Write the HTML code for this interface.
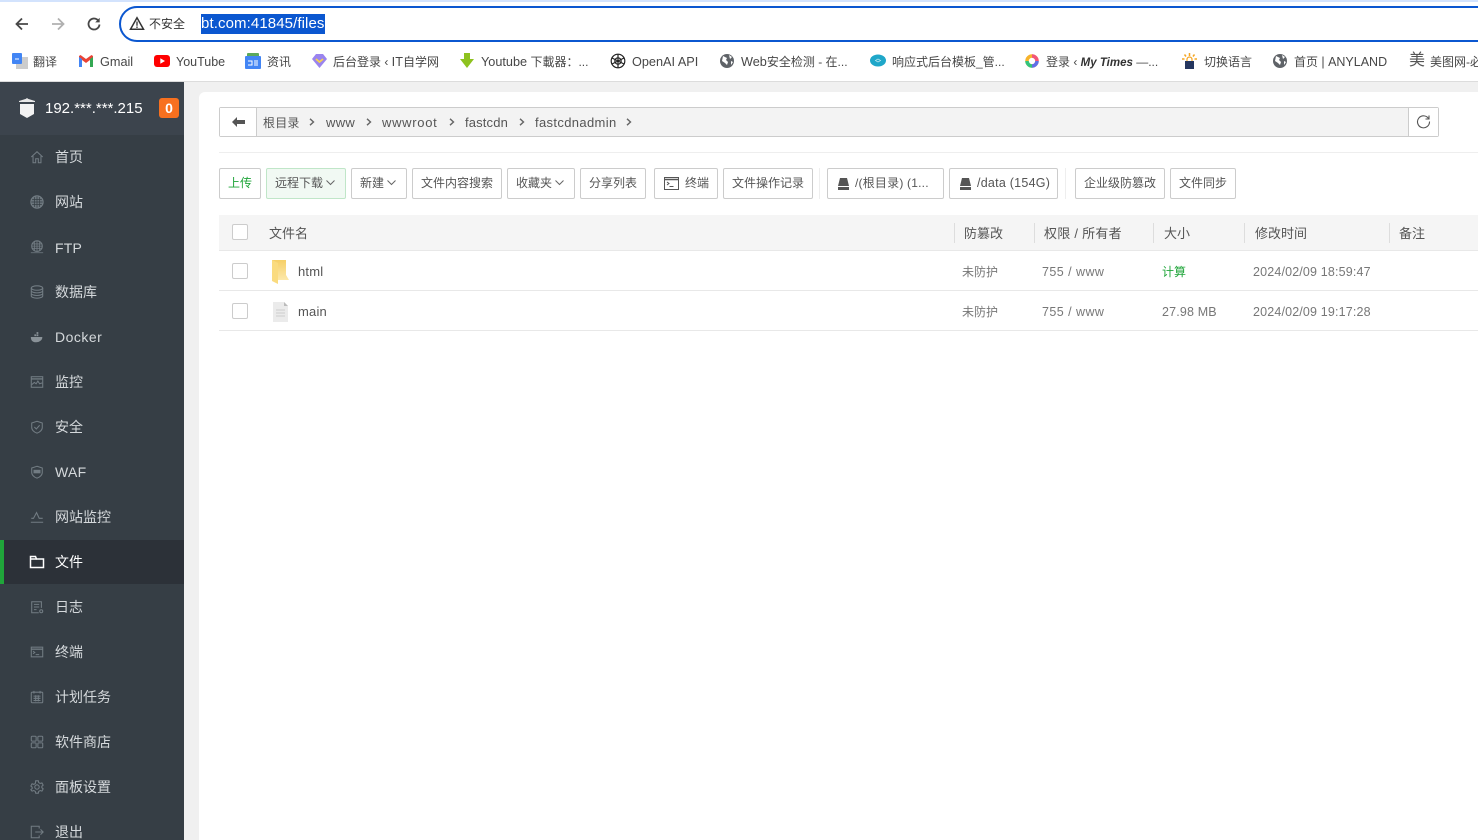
<!DOCTYPE html>
<html lang="zh-CN"><head><meta charset="utf-8"><title>文件管理</title>
<style>
*{box-sizing:border-box}
html,body{margin:0;padding:0;width:1478px;height:840px;overflow:hidden;background:#f0f0f0;font-family:"Liberation Sans","Noto Sans CJK SC",sans-serif}
body{position:relative}
.a,.t,.m,.b,.i{position:absolute}
.t,.m,.b{white-space:nowrap}
.t{line-height:20px}
.bm{font-size:12px;color:#474747;top:52px}
.l{font-size:12.7px}
.m{left:55px;font-size:14px;line-height:20px;color:#d5d9dc}
.i{left:29px;width:16px;height:16px;fill:none;stroke:#727c83;stroke-width:1.2;transform:scale(.88)}
.b{top:168px;height:31px;border:1px solid #ccc;border-radius:2px;background:#fff;font-size:12px;line-height:29px;color:#555;text-align:center}
.h{font-size:13px;color:#555;top:224px}
.c{font-size:12px;color:#777}
.n{font-size:12.5px;letter-spacing:.16px}
.s{position:absolute;width:1px;background:#ddd;top:223px;height:20px}
.cb{position:absolute;width:16px;height:16px;border:1px solid #ccc;border-radius:2px;background:#fff;left:232px}
.cr{position:absolute;top:118px;width:8px;height:8px;fill:none;stroke:#666;stroke-width:1.4}
.p{font-size:13px;color:#555;top:113px;letter-spacing:.3px}
</style></head><body>

<!-- browser chrome -->
<div class="a" style="left:0;top:0;width:1478px;height:82px;background:#fff;border-bottom:1px solid #dcdcdc"></div>
<div class="a" style="left:0;top:0;width:1478px;height:2px;background:#d3e3fd"></div>
<svg class="a" style="left:14px;top:16px" width="16" height="16" viewBox="0 0 16 16" fill="none" stroke="#474747" stroke-width="1.8"><path d="M14 8H3M8 2.500L2.500 8 8 13.500"/></svg>
<svg class="a" style="left:50px;top:16px" width="16" height="16" viewBox="0 0 16 16" fill="none" stroke="#b0b0b0" stroke-width="1.8"><path d="M2 8h11M8 2.500L13.500 8 8 13.500"/></svg>
<svg class="a" style="left:86px;top:16px" width="16" height="16" viewBox="0 0 16 16" fill="none" stroke="#474747" stroke-width="1.8"><path d="M13.500 8.500A5.500 5.500 0 1 1 11.800 4"/><path d="M13.700 1.800v4.600H9.200z" fill="#474747" stroke="none"/></svg>
<div class="a" style="left:119px;top:6px;width:1400px;height:36px;border:2px solid #0b57d0;border-radius:18px;background:#fff"></div>
<svg class="a" style="left:129px;top:16px" width="16" height="15" viewBox="0 0 16 15" fill="none" stroke="#333" stroke-width="1.5"><path d="M8 1.800L1.500 13.200h13z"/><path d="M8 5.500v4.200M8 10.500v1.500" stroke-width="1.3"/></svg>
<div class="t" style="left:149px;top:14px;font-size:12px;color:#333">不安全</div>
<div class="a" style="left:201px;top:14px;width:124px;height:20px;background:#0b57d0"></div>
<div class="t" style="left:201px;top:14px;font-size:15px;color:#fff;letter-spacing:.1px">bt.com:41845/files</div>

<!-- bookmarks -->
<svg class="a" style="left:12px;top:53px" width="16" height="16" viewBox="0 0 16 16"><rect x="4" y="4" width="12" height="12" fill="#ccc"/><rect width="10" height="11" rx="1" fill="#4285f4"/><path d="M3 6h4" stroke="#fff"/></svg>
<div class="t bm" style="left:33px">翻译</div>
<svg class="a" style="left:79px;top:55px" width="14" height="12" viewBox="0 0 14 12"><path d="M0 1v11h3V5l4 3 4-3v7h3V1L12.500 0 7 4 1.500 0z" fill="#ea4335"/><path d="M0 2v10h3V4z" fill="#4285f4"/><path d="M11 4v8h3V2z" fill="#34a853"/></svg>
<div class="t bm l" style="left:100px">Gmail</div>
<svg class="a" style="left:154px;top:55px" width="16" height="12" viewBox="0 0 16 12"><rect width="16" height="12" rx="3" fill="#f00"/><path d="M6.300 3.300v5.400L11 6z" fill="#fff"/></svg>
<div class="t bm l" style="left:176px;font-size:12.500px">YouTube</div>
<svg class="a" style="left:245px;top:53px" width="16" height="16" viewBox="0 0 16 16"><rect x="2" y="0" width="12" height="6" rx="1" fill="#5aa85c"/><rect x="0" y="3" width="16" height="13" rx="1" fill="#4285f4"/><path d="M3 8h4v4H3M9 8h4M9 10h4M9 12h4" stroke="#fff" fill="none"/></svg>
<div class="t bm" style="left:267px">资讯</div>
<svg class="a" style="left:312px;top:54px" width="15" height="14" viewBox="0 0 15 14"><path d="M4 0h7l4 5-7.500 9L0 5z" fill="#9a84ee"/><path d="M4 5l3.500 3L11 5" stroke="#f7d44c" stroke-width="1.800" fill="none"/></svg>
<div class="t bm" style="left:333px">后台登录 ‹ <span class="l">IT</span>自学网</div>
<svg class="a" style="left:460px;top:53px" width="14" height="16" viewBox="0 0 14 16"><path d="M4 0h6v6h4l-7 9-7-9h4z" fill="#8ec21f"/></svg>
<div class="t bm" style="left:481px"><span class="l">Youtube</span> 下載器：...</div>
<svg class="a" style="left:610px;top:53px" width="16" height="16" viewBox="0 0 16 16" fill="none" stroke="#222" stroke-width="1.200"><circle cx="8" cy="8" r="6.800"/><circle cx="8" cy="8" r="3.200"/><path d="M8 1.200v6.800M2 5l6 3M2 11l6-3M8 14.800V8M14 11L8 8M14 5L8 8"/></svg>
<div class="t bm l" style="left:632px">OpenAI API</div>
<svg class="a" style="left:720px;top:54px" width="14" height="14" viewBox="0 0 14 14"><circle cx="7" cy="7" r="7" fill="#5f6368"/><path d="M3 2l4 2-1 2 2 2-1 3-2-2-3-2zM9 1l3 2-2 2zM11 7l2 1-2 3z" fill="#fff"/></svg>
<div class="t bm" style="left:741px"><span class="l">Web</span>安全检测 - 在...</div>
<svg class="a" style="left:870px;top:54px" width="16" height="13" viewBox="0 0 16 13"><ellipse cx="8" cy="6.500" rx="8" ry="6" fill="#1fa7c9"/><path d="M5.500 6.500L8 5l2.500 1.500L8 8z" fill="none" stroke="#d6f2f8" stroke-width=".7"/></svg>
<div class="t bm" style="left:892px">响应式后台模板_管...</div>
<svg class="a" style="left:1025px;top:54px" width="14" height="14" viewBox="0 0 14 14" fill="none" stroke-width="3.500"><circle cx="7" cy="7" r="5" stroke="#f7b32b"/><path d="M7 2a5 5 0 0 1 5 5" stroke="#f2557a"/><path d="M12 7a5 5 0 0 1-5 5" stroke="#5f6fe8"/><path d="M7 12a5 5 0 0 1-5-5" stroke="#33c47c"/></svg>
<div class="t bm" style="left:1046px">登录 ‹ <b style="font-style:italic;font-size:11.500px;color:#333">My Times</b> —...</div>
<svg class="a" style="left:1182px;top:53px" width="15" height="16" viewBox="0 0 15 16"><rect x="3" y="8" width="9" height="8" fill="#25365f"/><path d="M5 8V6.500a2.500 2.500 0 0 1 5 0V8" stroke="#f5a623" stroke-width="1.200" fill="none"/><path d="M7.500 0v3M2.500 1.500l1.500 2M12.500 1.500l-1.500 2M0 6h2.500M12.500 6H15" stroke="#f5a623" stroke-width="1.500"/></svg>
<div class="t bm" style="left:1204px">切换语言</div>
<svg class="a" style="left:1273px;top:54px" width="14" height="14" viewBox="0 0 14 14"><circle cx="7" cy="7" r="7" fill="#5f6368"/><path d="M3 2l4 2-1 2 2 2-1 3-2-2-3-2zM9 1l3 2-2 2zM11 7l2 1-2 3z" fill="#fff"/></svg>
<div class="t bm" style="left:1294px">首页 <span class="l" style="font-size:12.500px">| ANYLAND</span></div>
<div class="t" style="left:1409px;top:51px;font-size:16px;color:#555">美</div>
<div class="t bm" style="left:1430px">美图网-必</div>

<!-- sidebar -->
<div class="a" style="left:0;top:82px;width:184px;height:758px;background:#363e45"></div>
<div class="a" style="left:0;top:82px;width:184px;height:53px;background:#3c444d"></div>
<svg class="a" style="left:18px;top:98px" width="18" height="21" viewBox="0 0 18 21"><path d="M1 3l8-2.500L17 3v1H1z" fill="#e8e8e8"/><path d="M9 0v4" stroke="#e8e8e8"/><path d="M2 6h14v10l-7 4-7-4z" fill="#f2f2f2"/></svg>
<div class="t" style="left:45px;top:99px;font-size:15px;color:#fff">192.***.***.215</div>
<div class="a" style="left:159px;top:98px;width:20px;height:20px;background:#f7701f;border-radius:3px;color:#fff;font-size:14px;font-weight:bold;text-align:center;line-height:20px">0</div>
<div class="a" style="left:0;top:540px;width:184px;height:44px;background:#2c3138"></div>
<div class="a" style="left:0;top:540px;width:4px;height:44px;background:#20a53a"></div>

<div class="m" style="top:147px">首页</div>
<div class="m" style="top:192px">网站</div>
<div class="m" style="top:238px;letter-spacing:.2px">FTP</div>
<div class="m" style="top:282px">数据库</div>
<div class="m" style="top:327px;letter-spacing:.5px">Docker</div>
<div class="m" style="top:372px">监控</div>
<div class="m" style="top:417px">安全</div>
<div class="m" style="top:462px;letter-spacing:.3px">WAF</div>
<div class="m" style="top:507px">网站监控</div>
<div class="m" style="top:552px;color:#fff">文件</div>
<div class="m" style="top:597px">日志</div>
<div class="m" style="top:642px">终端</div>
<div class="m" style="top:687px">计划任务</div>
<div class="m" style="top:732px">软件商店</div>
<div class="m" style="top:777px">面板设置</div>
<div class="m" style="top:822px">退出</div>

<svg class="i" style="top:149px" viewBox="0 0 16 16"><path d="M1.500 8L8 2l6.500 6M3.500 7v7.500h3V10h3v4.500h3V7"/></svg>
<svg class="i" style="top:194px" viewBox="0 0 16 16"><circle cx="8" cy="8" r="7" fill="#6b757c"/><path d="M1.500 8h13M2.500 5h11M2.500 11h11M8 1.500v13M5 2.500v11M11 2.500v11" stroke="#363e45" stroke-width=".8"/></svg>
<svg class="i" style="top:239px" viewBox="0 0 16 16"><circle cx="8" cy="7" r="6"/><path d="M2 7h12M8 1v12M5 2v10M11 2v10M2 4.500h12M2 9.500h12M1 14.500h14" stroke-width=".9"/></svg>
<svg class="i" style="top:284px" viewBox="0 0 16 16"><ellipse cx="8" cy="3.500" rx="6.500" ry="2.500"/><path d="M1.500 3.500v9c0 1.400 3 2.500 6.500 2.500s6.500-1.100 6.500-2.500v-9M1.500 6.500C1.500 8 4.500 9 8 9s6.500-1 6.500-2.500M1.500 9.500C1.500 11 4.500 12 8 12s6.500-1 6.500-2.500"/></svg>
<svg class="i" style="top:329px" viewBox="0 0 16 16"><path d="M1 8h13c.5 3-3 6-7 6-4 0-6-2-6-6zM5 5h2v2H5zM7.500 5h2v2h-2zM7.500 2.500h2v2h-2zM14 7.500l1.500.5" fill="#8a9298" stroke="none"/></svg>
<svg class="i" style="top:374px" viewBox="0 0 16 16"><rect x="1.500" y="2" width="13" height="12"/><path d="M1.500 4.500h13" stroke-width="1.500"/><path d="M2 11l3-2.500 2 1.500 2-3 2 3 3-1"/></svg>
<svg class="i" style="top:419px" viewBox="0 0 16 16"><path d="M8 1.500l6 2v5c0 3-3 5.500-6 6.500-3-1-6-3.500-6-6.500v-5z"/><path d="M5 8l2.200 2.200L11 6"/></svg>
<svg class="i" style="top:464px" viewBox="0 0 16 16"><path d="M8 1.500l6 2v5c0 3-3 5.500-6 6.500-3-1-6-3.500-6-6.500v-5z"/><rect x="4" y="5.500" width="8" height="4" fill="#727c83" stroke="none"/></svg>
<svg class="i" style="top:509px" viewBox="0 0 16 16"><path d="M1.500 9.500H4L7.500 3l3 6.500h4M1 14h14"/></svg>
<svg class="i" style="top:554px;stroke:#fff;stroke-width:1.500;transform:none;left:29px" viewBox="0 0 16 16"><path d="M1.500 2.500h5l1 2.500h7v8.500h-13z"/><path d="M1.500 5h6"/></svg>
<svg class="i" style="top:599px" viewBox="0 0 16 16"><path d="M13 9V2H2v12.500h8M4.500 5h6M4.500 8h6M4.500 11h3"/><circle cx="12.800" cy="12.800" r="1.700"/></svg>
<svg class="i" style="top:644px" viewBox="0 0 16 16"><rect x="1.500" y="2.500" width="13" height="11"/><path d="M1.500 4.800h13" stroke-width="1.500"/><path d="M3.500 7l2 1.500-2 1.500M6.500 11h4"/></svg>
<svg class="i" style="top:689px" viewBox="0 0 16 16"><rect x="1.500" y="2.500" width="13" height="12" rx="1"/><path d="M4.500 1v3M11.500 1v3M4 7h8M4 9.500h8M4 12h8M6.500 6v7M9.500 6v7"/></svg>
<svg class="i" style="top:734px" viewBox="0 0 16 16" stroke-width="1.300"><rect x="1.500" y="1.500" width="5.500" height="5.500" rx="1"/><rect x="9" y="1.500" width="5.500" height="5.500" rx="1"/><rect x="1.500" y="9" width="5.500" height="5.500" rx="1"/><rect x="9" y="9" width="5.500" height="5.500" rx="1"/></svg>
<svg class="i" style="top:779px" viewBox="0 0 16 16"><circle cx="8" cy="8" r="2.500"/><path d="M6.500 1.500h3l.4 2 1.700 1 2-.7 1.400 2.600-1.500 1.300v1.600l1.500 1.300-1.400 2.600-2-.7-1.700 1-.4 2h-3l-.4-2-1.700-1-2 .7L1 11.600l1.500-1.300V8.700L1 7.400l1.400-2.600 2 .7 1.700-1z" transform="translate(0 -.5)"/></svg>
<svg class="i" style="top:824px" viewBox="0 0 16 16"><path d="M10.500 4V1.500h-9v13h9V12M6 8h9M12 5l3 3-3 3"/></svg>

<!-- content panel -->
<div class="a" style="left:199px;top:92px;width:1279px;height:748px;background:#fff;border-radius:6px 0 0 0"></div>

<!-- path bar -->
<div class="a" style="left:219px;top:107px;width:1220px;height:30px;border:1px solid #ccc;border-radius:2px;background:#f3f3f3"></div>
<div class="a" style="left:220px;top:108px;width:37px;height:28px;background:#fff;border-right:1px solid #ccc"></div>
<svg class="a" style="left:232px;top:117px" width="13" height="10" viewBox="0 0 13 10"><path d="M0 5l5-5v3h8v4H5v3z" fill="#555"/></svg>
<div class="a" style="left:1408px;top:108px;width:30px;height:28px;background:#fff;border-left:1px solid #ccc"></div>
<svg class="a" style="left:1416px;top:114px" width="15" height="15" viewBox="0 0 15 15" fill="none" stroke="#555" stroke-width="1.100"><path d="M12.800 5a6 6 0 1 0 .7 2.500"/><path d="M13 1.500V5H9.500"/></svg>
<div class="t p" style="left:263px;font-size:12px;letter-spacing:.2px">根目录</div>
<div class="t p" style="left:326px">www</div>
<div class="t p" style="left:382px;letter-spacing:.7px">wwwroot</div>
<div class="t p" style="left:465px;letter-spacing:.15px">fastcdn</div>
<div class="t p" style="left:535px;letter-spacing:.35px">fastcdnadmin</div>
<svg class="cr" style="left:308px" viewBox="0 0 8 8"><path d="M2 .8L5.500 4 2 7.200"/></svg>
<svg class="cr" style="left:365px" viewBox="0 0 8 8"><path d="M2 .8L5.500 4 2 7.200"/></svg>
<svg class="cr" style="left:448px" viewBox="0 0 8 8"><path d="M2 .8L5.500 4 2 7.200"/></svg>
<svg class="cr" style="left:518px" viewBox="0 0 8 8"><path d="M2 .8L5.500 4 2 7.200"/></svg>
<svg class="cr" style="left:625px" viewBox="0 0 8 8"><path d="M2 .8L5.500 4 2 7.200"/></svg>
<div class="a" style="left:219px;top:152px;width:1259px;height:1px;background:#eee"></div>

<!-- buttons -->
<div class="b" style="left:219px;width:42px;color:#20a53a">上传</div>
<div class="b" style="left:266px;width:80px;background:#f1f9f3;border-color:#c0e6c8;text-align:left;padding-left:8px">远程下载<svg style="margin-left:3px;vertical-align:1px" width="9" height="6" viewBox="0 0 9 6" fill="none" stroke="#666"><path d="M.5 .5l4 4 4-4"/></svg></div>
<div class="b" style="left:351px;width:56px;text-align:left;padding-left:8px">新建<svg style="margin-left:3px;vertical-align:1px" width="9" height="6" viewBox="0 0 9 6" fill="none" stroke="#666"><path d="M.5 .5l4 4 4-4"/></svg></div>
<div class="b" style="left:412px;width:90px">文件内容搜索</div>
<div class="b" style="left:507px;width:68px;text-align:left;padding-left:8px">收藏夹<svg style="margin-left:3px;vertical-align:1px" width="9" height="6" viewBox="0 0 9 6" fill="none" stroke="#666"><path d="M.5 .5l4 4 4-4"/></svg></div>
<div class="b" style="left:580px;width:66px">分享列表</div>
<div class="b" style="left:654px;width:64px;text-align:left;padding-left:30px">终端</div>
<svg class="a" style="left:664px;top:177px" width="15" height="13" viewBox="0 0 15 13" fill="none" stroke="#555"><rect x=".5" y=".5" width="14" height="12"/><path d="M.5 2.500h14" stroke-width="1.500"/><path d="M3 5l2 1.500L3 8M5.500 9.500h4"/></svg>
<div class="b" style="left:723px;width:90px">文件操作记录</div>
<div class="a" style="left:819px;top:168px;width:1px;height:31px;background:#eee"></div>
<div class="b" style="left:827px;width:117px;text-align:left;padding-left:27px;letter-spacing:.2px">/(根目录) (1...</div>
<svg class="a" style="left:838px;top:178px" width="11" height="12" viewBox="0 0 11 12"><path d="M2 0h7l2 8H0z" fill="#555"/><rect y="9" width="11" height="3" fill="#555"/></svg>
<div class="b" style="left:949px;width:109px;text-align:left;padding-left:27px;font-size:12.500px;letter-spacing:.25px">/data (154G)</div>
<svg class="a" style="left:960px;top:178px" width="11" height="12" viewBox="0 0 11 12"><path d="M2 0h7l2 8H0z" fill="#555"/><rect y="9" width="11" height="3" fill="#555"/></svg>
<div class="a" style="left:1065px;top:168px;width:1px;height:31px;background:#eee"></div>
<div class="b" style="left:1075px;width:90px">企业级防篡改</div>
<div class="b" style="left:1170px;width:66px">文件同步</div>

<!-- table -->
<div class="a" style="left:219px;top:215px;width:1259px;height:36px;background:#f5f5f5;border-bottom:1px solid #e8e8e8"></div>
<div class="a" style="left:219px;top:290px;width:1259px;height:1px;background:#e8e8e8"></div>
<div class="a" style="left:219px;top:330px;width:1259px;height:1px;background:#e8e8e8"></div>
<div class="cb" style="top:224px"></div>
<div class="cb" style="top:263px"></div>
<div class="cb" style="top:303px"></div>
<div class="s" style="left:954px"></div>
<div class="s" style="left:1034px"></div>
<div class="s" style="left:1153px"></div>
<div class="s" style="left:1244px"></div>
<div class="s" style="left:1389px"></div>
<div class="t h" style="left:269px">文件名</div>
<div class="t h" style="left:964px">防篡改</div>
<div class="t h" style="left:1044px;letter-spacing:.25px">权限 / 所有者</div>
<div class="t h" style="left:1164px">大小</div>
<div class="t h" style="left:1255px">修改时间</div>
<div class="t h" style="left:1399px">备注</div>

<svg class="a" style="left:272px;top:260px" width="17" height="24" viewBox="0 0 17 24"><defs><linearGradient id="f" x1="0" y1="0" x2="0" y2="1"><stop offset="0" stop-color="#f6cf67"/><stop offset="1" stop-color="#fce8aa"/></linearGradient></defs><path d="M0 0h14v15l3 5H0z" fill="url(#f)"/><path d="M0 0l6 3v21l-6-3z" fill="#fadb7f"/></svg>
<div class="t" style="left:298px;top:262px;font-size:13px;color:#555;letter-spacing:.2px">html</div>
<svg class="a" style="left:273px;top:302px" width="15" height="20" viewBox="0 0 15 20"><path d="M0 0h11l4 4v16H0z" fill="#ebebeb"/><path d="M11 0v4h4z" fill="#bbb"/><path d="M3 8h9M3 11h9M3 14h9" stroke="#ccc"/></svg>
<div class="t" style="left:298px;top:302px;font-size:13px;color:#555;letter-spacing:.2px">main</div>

<div class="t c" style="left:962px;top:262px">未防护</div>
<div class="t c n" style="left:1042px;top:262px;letter-spacing:.45px">755 / www</div>
<div class="t c" style="left:1162px;top:262px;color:#20a53a">计算</div>
<div class="t c n" style="left:1253px;top:262px">2024/02/09 18:59:47</div>
<div class="t c" style="left:962px;top:302px">未防护</div>
<div class="t c n" style="left:1042px;top:302px;letter-spacing:.45px">755 / www</div>
<div class="t c n" style="left:1162px;top:302px">27.98 MB</div>
<div class="t c n" style="left:1253px;top:302px">2024/02/09 19:17:28</div>
</body></html>
